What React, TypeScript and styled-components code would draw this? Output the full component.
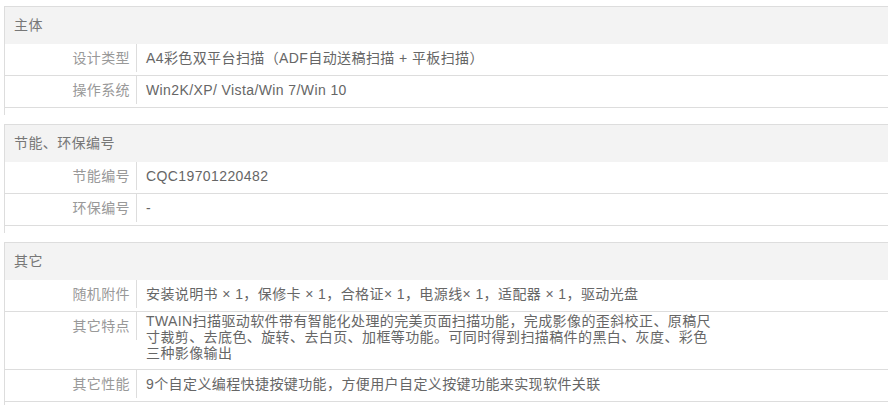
import styled, { createGlobalStyle } from "styled-components";

const GlobalStyle = createGlobalStyle`
  html, body {
    margin: 0;
    padding: 0;
    background: #fff;
  }
  body {
    font-family: "Liberation Sans", "Noto Sans CJK SC", sans-serif;
    font-size: 14px;
    letter-spacing: 0.4px;
  }
`;

const Page = styled.div`
  padding: 6px 0 0 4px;
  width: 884px;
`;

const Section = styled.section`
  border-top: 1px solid #dddddd;
  border-left: 1px solid #dddddd;
  padding-bottom: 7px;
  margin-bottom: 9px;
`;

const Header = styled.h3`
  margin: 0;
  height: 37px;
  line-height: 37px;
  padding-left: 9px;
  background-color: #f3f3f3;
  color: #777;
  font-size: 14px;
  font-weight: 400;
`;

const Row = styled.dl`
  display: flex;
  align-items: flex-start;
  margin: 0;
  padding-bottom: 3px;
  border-bottom: 1px solid #dddddd;
`;

const Label = styled.dt`
  flex: 0 0 125px;
  height: 28px;
  line-height: 28px;
  padding-right: 6px;
  text-align: right;
  color: #999;
  border-right: 1px solid #dddddd;
`;

const Value = styled.dd<{ $multi?: boolean }>`
  margin: 0;
  padding: ${(p) => (p.$multi ? "1px 0 5px 9px" : "0 0 0 9px")};
  line-height: ${(p) => (p.$multi ? "16px" : "28px")};
  color: #666;
`;

const Line = styled.span`
  display: block;
  white-space: nowrap;
`;

interface ISpec {
  label: string;
  value: string | string[];
}

interface IGroup {
  title: string;
  specs: ISpec[];
}

const groups: IGroup[] = [
  {
    title: "主体",
    specs: [
      { label: "设计类型", value: "A4彩色双平台扫描（ADF自动送稿扫描 + 平板扫描）" },
      { label: "操作系统", value: "Win2K/XP/ Vista/Win 7/Win 10" },
    ],
  },
  {
    title: "节能、环保编号",
    specs: [
      { label: "节能编号", value: "CQC19701220482" },
      { label: "环保编号", value: "-" },
    ],
  },
  {
    title: "其它",
    specs: [
      {
        label: "随机附件",
        value: "安装说明书 × 1，保修卡 × 1，合格证× 1，电源线× 1，适配器 × 1，驱动光盘",
      },
      {
        label: "其它特点",
        value: [
          "TWAIN扫描驱动软件带有智能化处理的完美页面扫描功能，完成影像的歪斜校正、原稿尺",
          "寸裁剪、去底色、旋转、去白页、加框等功能。可同时得到扫描稿件的黑白、灰度、彩色",
          "三种影像输出",
        ],
      },
      { label: "其它性能", value: "9个自定义编程快捷按键功能，方便用户自定义按键功能来实现软件关联" },
    ],
  },
];

function App() {
  return (
    <>
      <GlobalStyle />
      <Page>
        {groups.map((group) => (
          <Section key={group.title}>
            <Header>{group.title}</Header>
            {group.specs.map((spec) => (
              <Row key={spec.label}>
                <Label>{spec.label}</Label>
                {Array.isArray(spec.value) ? (
                  <Value $multi>
                    {spec.value.map((line) => (
                      <Line key={line}>{line}</Line>
                    ))}
                  </Value>
                ) : (
                  <Value>{spec.value}</Value>
                )}
              </Row>
            ))}
          </Section>
        ))}
      </Page>
    </>
  );
}

export default App;
